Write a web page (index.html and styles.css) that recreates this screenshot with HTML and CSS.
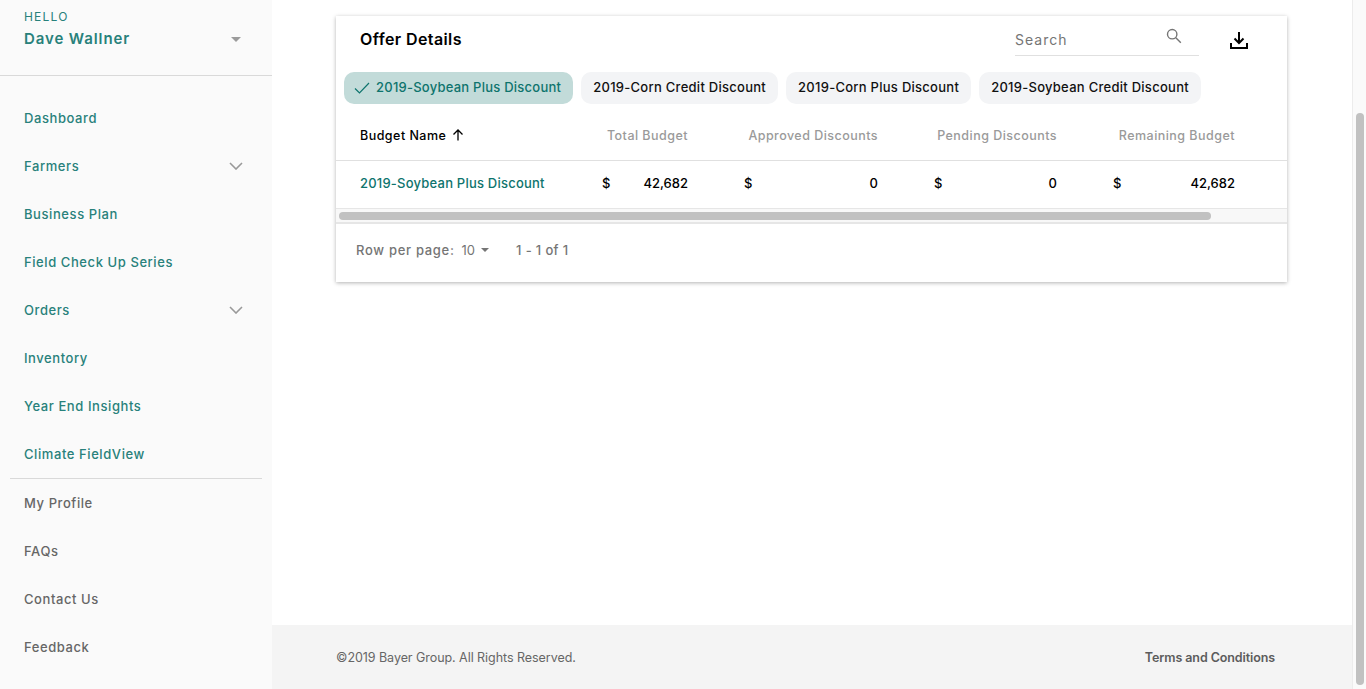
FILE: index.html
```html
<!DOCTYPE html>
<html>
<head>
  <title>Offer Details</title>
  <meta charset="UTF-8" />
  <link rel="stylesheet" href="styles.css">
</head>
<body>

  <aside class="sidebar">
    <div class="user">
      <div class="user-text">
        <div class="hello">HELLO</div>
        <div class="user-name">Dave Wallner</div>
      </div>
      <span class="caret caret-user"></span>
    </div>
    <nav class="nav-main">
      <a class="nav-item">Dashboard</a>
      <a class="nav-item">Farmers
        <svg class="chevron" viewBox="0 0 14 8"><path d="M1 1l6 6 6-6" /></svg>
      </a>
      <a class="nav-item">Business Plan</a>
      <a class="nav-item">Field Check Up Series</a>
      <a class="nav-item">Orders
        <svg class="chevron" viewBox="0 0 14 8"><path d="M1 1l6 6 6-6" /></svg>
      </a>
      <a class="nav-item">Inventory</a>
      <a class="nav-item">Year End Insights</a>
      <a class="nav-item">Climate FieldView</a>
    </nav>
    <nav class="nav-second">
      <a class="nav-item">My Profile</a>
      <a class="nav-item">FAQs</a>
      <a class="nav-item">Contact Us</a>
      <a class="nav-item">Feedback</a>
    </nav>
  </aside>

  <div class="main">
    <div class="content">
      <section class="card">
        <div class="card-head">
          <h2>Offer Details</h2>
          <div class="search">
            <span>Search</span>
            <svg class="search-icon" viewBox="0 0 16 16"><circle cx="6.2" cy="6.2" r="4.7" /><path d="M9.8 9.8l5 5" /></svg>
          </div>
          <svg class="download" viewBox="0 0 18 18"><path d="M9 1v11M4.500 7.500L9 12l4.500-4.500" /><path d="M1 12v5h16v-5" /></svg>
        </div>

        <div class="chips">
          <span class="chip chip-active">
            <svg class="check" viewBox="0 0 16 12"><path d="M1 6.500l4.500 4.500L15 1" /></svg>
            2019-Soybean Plus Discount
          </span>
          <span class="chip">2019-Corn Credit Discount</span>
          <span class="chip">2019-Corn Plus Discount</span>
          <span class="chip">2019-Soybean Credit Discount</span>
        </div>

        <div class="row row-head">
          <div class="col-name sort">Budget Name
            <svg class="sort-icon" viewBox="0 0 12 12"><path d="M6 11.500V1M1.500 5.500L6 1l4.500 4.500" /></svg>
          </div>
          <div class="col-total">Total Budget</div>
          <div class="col-approved">Approved Discounts</div>
          <div class="col-pending">Pending Discounts</div>
          <div class="col-remaining">Remaining Budget</div>
        </div>

        <div class="row row-body">
          <div class="col-name budget-link">2019-Soybean Plus Discount</div>
          <div class="col-total money"><span>$</span><span>42,682</span></div>
          <div class="col-approved money"><span>$</span><span>0</span></div>
          <div class="col-pending money"><span>$</span><span>0</span></div>
          <div class="col-remaining money"><span>$</span><span>42,682</span></div>
        </div>

        <div class="hscroll"><div class="hscroll-thumb"></div></div>

        <div class="pager">
          <span class="pager-label">Row per page:</span>
          <span class="pager-size">10</span>
          <span class="caret caret-small"></span>
          <span class="pager-range">1 - 1 of 1</span>
        </div>
      </section>
    </div>

    <footer class="footer">
      <span>©2019 Bayer Group. All Rights Reserved.</span>
      <a class="terms">Terms and Conditions</a>
    </footer>
  </div>

  <div class="vscroll"><div class="vscroll-thumb"></div></div>

</body>
</html>
```

FILE: styles.css
```css
* {
  box-sizing: border-box;
}

body {
  margin: 0;
  height: 689px;
  overflow: hidden;
  display: flex;
  background: #fff;
  font-family: 'Inter', 'Liberation Sans', sans-serif;
  font-size: 13px;
  color: #000;
}

/* sidebar */
.sidebar {
  width: 272px;
  flex: none;
  background: #fafafa;
}

.user {
  height: 76px;
  padding: 10px 28px 0 24px;
  display: flex;
  justify-content: space-between;
  border-bottom: 1px solid #d9d9d9;
}

.hello {
  font-size: 12px;
  line-height: 14px;
  color: #28817b;
  letter-spacing: 1.2px;
}

.user-name {
  margin-top: 6px;
  font-size: 15px;
  line-height: 18px;
  font-weight: 600;
  color: #28817b;
  letter-spacing: 0.9px;
}

.caret {
  display: inline-block;
  width: 0;
  height: 0;
  border-left: 5px solid transparent;
  border-right: 5px solid transparent;
  border-top: 5px solid #9b9b9b;
}

.caret-user {
  margin-top: 27px;
  margin-right: 3px;
}

.nav-main {
  padding-top: 18px;
  margin: 0 10px;
  border-bottom: 1px solid #d9d9d9;
  height: 403px;
}

.nav-item {
  height: 48px;
  padding: 0 19px 0 14px;
  display: flex;
  align-items: center;
  justify-content: space-between;
  color: #28817b;
  font-weight: 500;
  letter-spacing: 0.58px;
}

.nav-second .nav-item {
  margin: 0 10px;
  color: #666;
}

.chevron {
  width: 14px;
  height: 8px;
  fill: none;
  stroke: #999;
  stroke-width: 1.6;
}

/* main */
.main {
  width: 1080px;
  flex: none;
  display: flex;
  flex-direction: column;
}

.content {
  flex: 1;
  padding: 16px 65px 0 64px;
}

.card {
  height: 266px;
  background: #fff;
  box-shadow: 0 1px 4px rgba(0, 0, 0, 0.3);
}

.card-head {
  height: 56px;
  padding: 0 39px 0 24px;
  display: flex;
  align-items: flex-start;
}

h2 {
  margin: 0;
  flex: 1;
  font-size: 16px;
  line-height: 47px;
  font-weight: 600;
  letter-spacing: 0.4px;
}

.search {
  width: 184px;
  height: 40px;
  padding-top: 8px;
  display: flex;
  justify-content: space-between;
  align-items: center;
  border-bottom: 1px solid #e0e0e0;
  color: #757575;
  font-size: 14px;
  letter-spacing: 1px;
}

.search-icon {
  width: 16px;
  height: 16px;
  margin: 0 17px 7px 0;
  fill: none;
  stroke: #757575;
  stroke-width: 1.4;
}

.download {
  width: 18px;
  height: 18px;
  margin: 15px 0 0 31px;
  fill: none;
  stroke: #000;
  stroke-width: 2;
}

.chips {
  display: flex;
  gap: 8px;
  padding-left: 8px;
}

.chip {
  height: 32px;
  padding: 0 12px 2px;
  display: flex;
  align-items: center;
  background: #f3f4f6;
  border-radius: 10px;
  font-size: 13px;
  font-weight: 500;
  letter-spacing: 0.27px;
  color: #111;
  white-space: nowrap;
}

.chip-active {
  background: #c2dbd9;
  color: #0e746d;
  letter-spacing: 0.24px;
}

.check {
  width: 16px;
  height: 12px;
  margin: 2px 6px 0 -2px;
  fill: none;
  stroke: #0e746d;
  stroke-width: 1.2;
}

.row {
  display: flex;
  align-items: center;
  padding-left: 24px;
}

.row-head {
  height: 57px;
  padding-top: 6px;
  border-bottom: 1px solid #e0e0e0;
  color: #9a9a9a;
  font-size: 12.500px;
  font-weight: 500;
  letter-spacing: 0.47px;
  text-align: right;
}

.row-body {
  height: 48px;
  padding-bottom: 4px;
  border-bottom: 1px solid #e6e6e6;
  font-size: 13px;
  font-weight: 500;
  letter-spacing: 0.22px;
}

.col-name {
  width: 198px;
  text-align: left;
}

.col-total {
  width: 130px;
}

.col-approved {
  width: 190px;
}

.col-pending {
  width: 179px;
}

.col-remaining {
  width: 178px;
}

.sort {
  color: #000;
  display: flex;
  align-items: center;
  gap: 6px;
}

.sort-icon {
  width: 12px;
  height: 12px;
  fill: none;
  stroke: #000;
  stroke-width: 1.3;
}

.budget-link {
  color: #0e746d;
}

.money {
  display: flex;
  justify-content: space-between;
  padding-left: 56px;
  letter-spacing: 0;
}

.col-total.money {
  padding-left: 44px;
}

.hscroll {
  height: 15px;
  padding: 3px;
  background: #f8f8f8;
  border-bottom: 2px solid #e6e6e6;
}

.hscroll-thumb {
  width: 872px;
  height: 8px;
  border-radius: 4px;
  background: #c1c1c1;
}

.pager {
  height: 58px;
  padding: 0 0 6px 20px;
  display: flex;
  align-items: center;
  color: #757575;
  font-size: 13px;
  font-weight: 500;
}

.pager-label {
  letter-spacing: 0.7px;
}

.pager-size {
  margin-left: 7px;
  font-weight: 400;
}

.caret-small {
  margin-left: 6px;
  border-left-width: 4px;
  border-right-width: 4px;
  border-top: 4px solid #757575;
}

.pager-range {
  margin-left: 27px;
  letter-spacing: 0.35px;
}

/* footer */
.footer {
  height: 64px;
  padding: 0 77px 0 64px;
  display: flex;
  align-items: center;
  justify-content: space-between;
  background: #f4f4f4;
  color: #666;
  font-size: 12.500px;
  letter-spacing: -0.05px;
}

.terms {
  font-weight: 600;
  color: #5c5c5c;
  letter-spacing: -0.1px;
}

/* page scrollbar */
.vscroll {
  width: 14px;
  flex: none;
  padding: 113px 2px 4px 3px;
  background: #fafafa;
  border-left: 1px solid #ececec;
}

.vscroll-thumb {
  height: 572px;
  border-radius: 4px;
  background: #c1c1c1;
}
```
